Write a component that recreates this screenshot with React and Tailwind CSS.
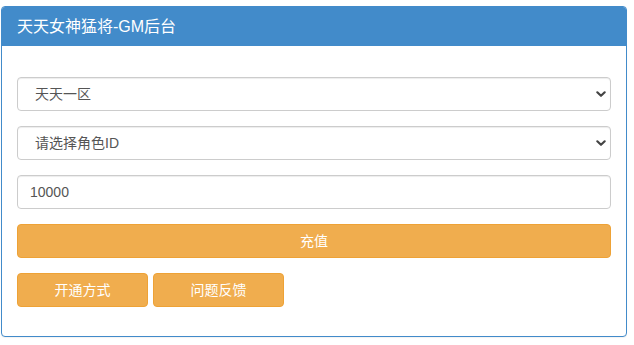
import React from "react";

const font = {
  fontFamily: '"Liberation Sans", "Noto Sans CJK SC", sans-serif',
};

function Chevron() {
  return (
    <svg
      width="12"
      height="12"
      viewBox="0 0 12 12"
      className="pointer-events-none absolute right-[4px] top-1/2 -translate-y-1/2"
    >
      <path
        d="M2.3 4.3 L6 7.8 L9.7 4.3"
        fill="none"
        stroke="#444"
        strokeWidth="2.2"
        strokeLinecap="round"
        strokeLinejoin="round"
      />
    </svg>
  );
}

function SelectBox({ options }) {
  return (
    <div className="relative">
      <select
        defaultValue={options[0]}
        className="block h-[34px] w-full appearance-none rounded-[4px] border border-[#ccc] bg-white pl-[17px] pr-8 text-[14px] text-[#555] shadow-[inset_0_1px_1px_rgba(0,0,0,0.075)] outline-none"
        style={font}
      >
        {options.map((o) => (
          <option key={o}>{o}</option>
        ))}
      </select>
      <Chevron />
    </div>
  );
}

function WarnButton({ children, className }) {
  return (
    <button
      className={
        "h-[34px] rounded-[4px] border border-[#eea236] bg-[#f0ad4e] text-[14px] text-white " +
        className
      }
      style={font}
    >
      {children}
    </button>
  );
}

export default function App() {
  return (
    <div className="min-h-[345px] bg-white pl-[1px] pt-[6px]" style={font}>
      <div className="w-[626px] overflow-hidden rounded-[4px] border border-[#428bca] bg-white shadow-[0_1px_1px_rgba(0,0,0,0.05)]">
        {/* Header */}
        <div className="flex h-[39px] items-center bg-[#428bca] px-[15px] text-[16px] text-white">
          天天女神猛将-GM后台
        </div>

        {/* Body */}
        <div className="flex flex-col gap-[15px] px-[15px] pb-[29px] pt-[31px]">
          <SelectBox options={["天天一区"]} />
          <SelectBox options={["请选择角色ID"]} />
          <input
            defaultValue="10000"
            className="block h-[34px] w-full rounded-[4px] border border-[#ccc] bg-white px-[12px] text-[14px] text-[#555] shadow-[inset_0_1px_1px_rgba(0,0,0,0.075)] outline-none"
            style={font}
          />
          <WarnButton className="w-full">充值</WarnButton>
          <div className="flex gap-[5px]">
            <WarnButton className="w-[131px]">开通方式</WarnButton>
            <WarnButton className="w-[131px]">问题反馈</WarnButton>
          </div>
        </div>
      </div>
    </div>
  );
}
